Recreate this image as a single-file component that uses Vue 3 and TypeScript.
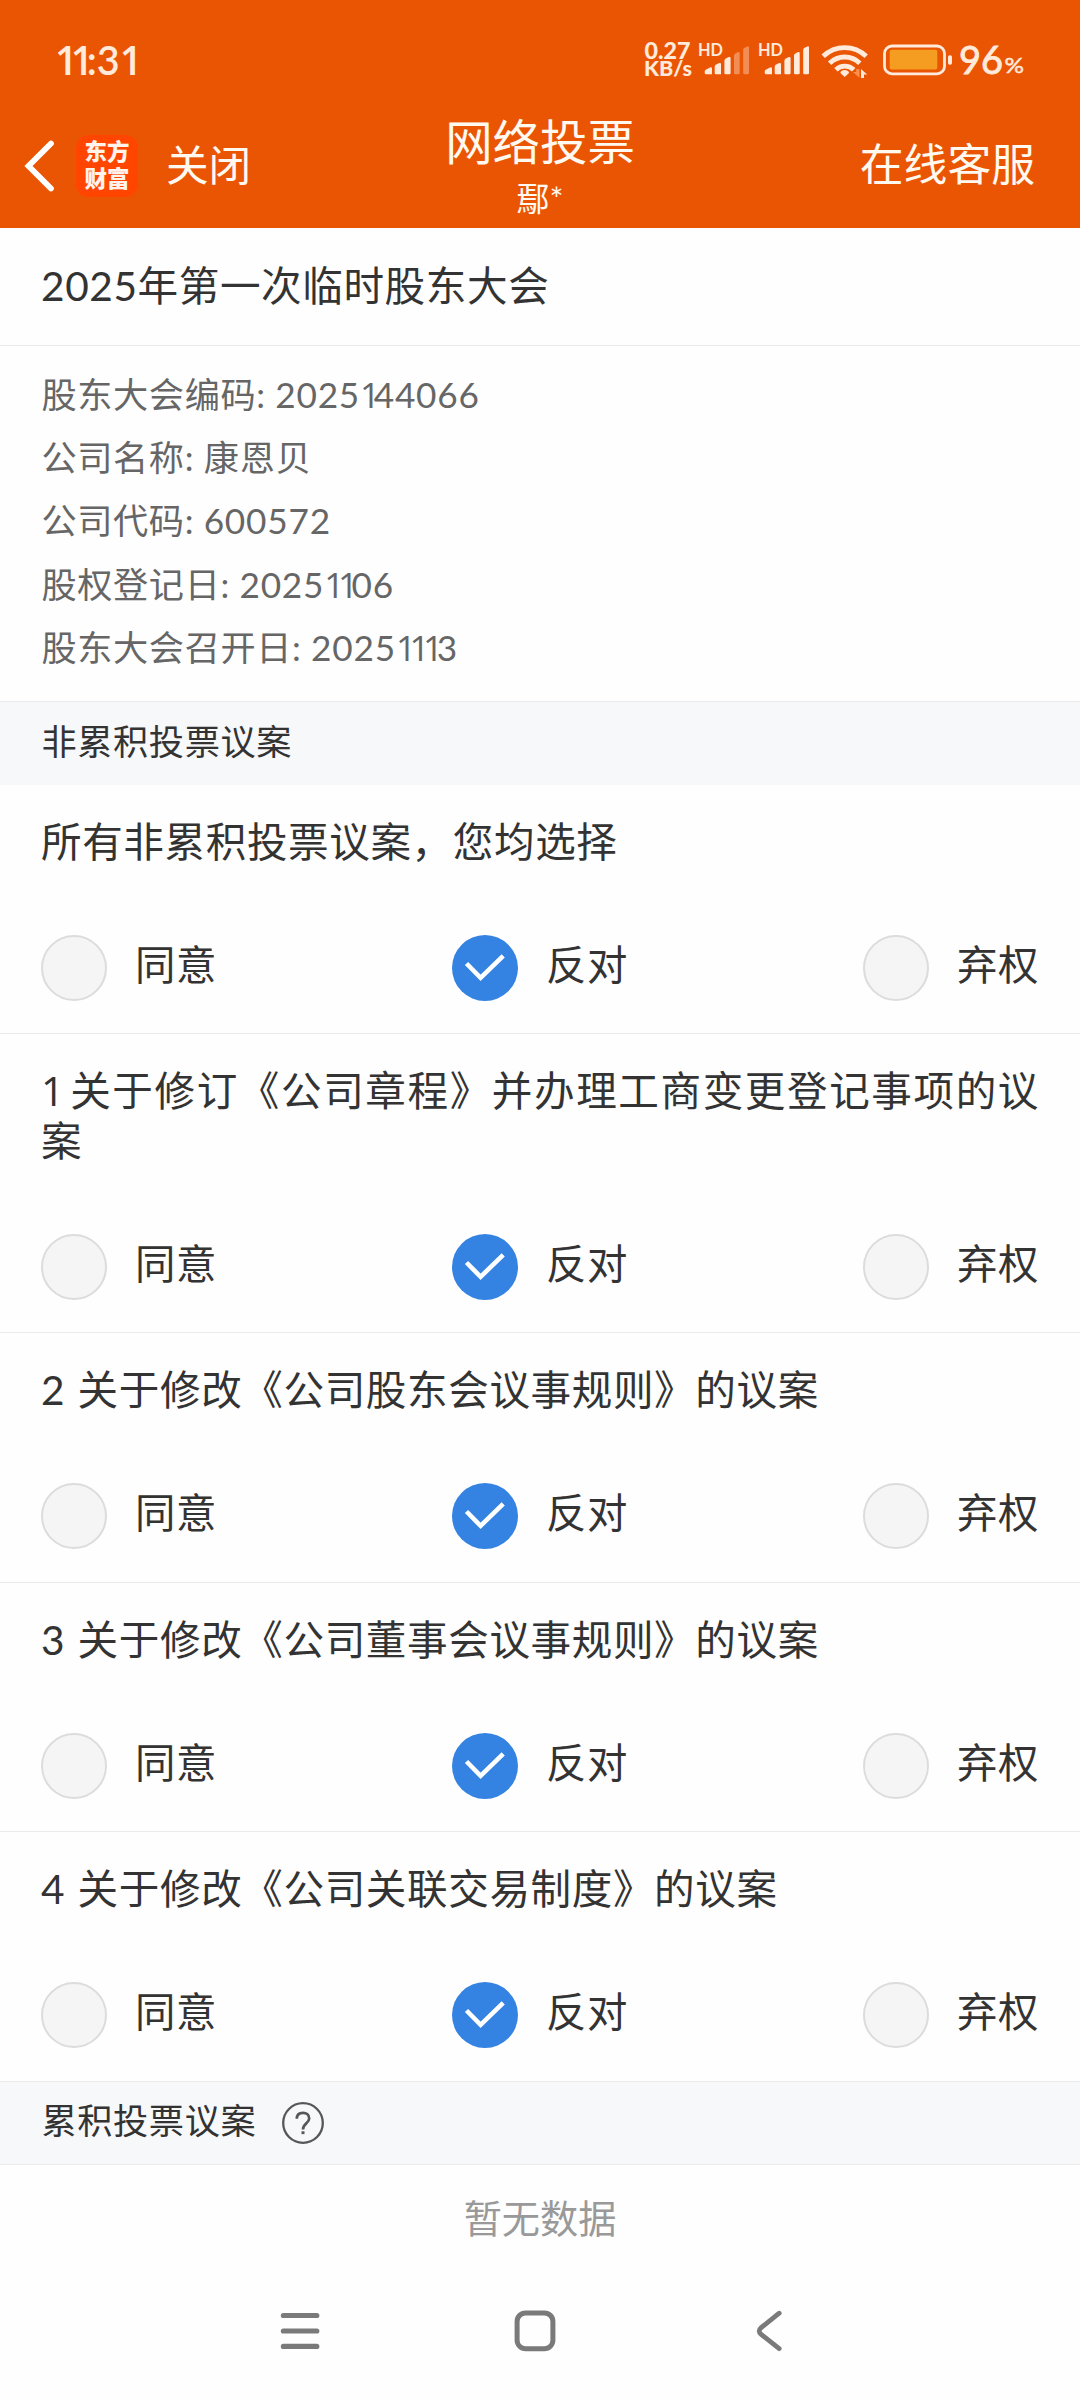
<script setup lang="ts">
import { ref } from 'vue'

type Choice = 'agree' | 'against' | 'abstain'

interface Proposal {
  title: string
  choice: Choice
}

const details = [
  { label: '股东大会编码', value: '2025144066' },
  { label: '公司名称', value: '康恩贝' },
  { label: '公司代码', value: '600572' },
  { label: '股权登记日', value: '20251106' },
  { label: '股东大会召开日', value: '20251113' },
]

const options: { key: Choice; text: string }[] = [
  { key: 'agree', text: '同意' },
  { key: 'against', text: '反对' },
  { key: 'abstain', text: '弃权' },
]

const proposals = ref<Proposal[]>([
  { title: '所有非累积投票议案，您均选择', choice: 'against' },
  { title: '1 关于修订《公司章程》并办理工商变更登记事项的议案', choice: 'against' },
  { title: '2 关于修改《公司股东会议事规则》的议案', choice: 'against' },
  { title: '3 关于修改《公司董事会议事规则》的议案', choice: 'against' },
  { title: '4 关于修改《公司关联交易制度》的议案', choice: 'against' },
])

// The digit 1 is set proportionally, narrower than the other figures.
function runs(text: string): string[] {
  return text.split(/(1+)/).filter((part) => part !== '')
}

function isOne(run: string): boolean {
  return run.startsWith('1')
}

function choose(index: number, key: Choice) {
  if (index === 0) proposals.value.forEach((p) => (p.choice = key))
  else proposals.value[index].choice = key
}
</script>

<template>
  <div class="screen">
    <header class="top">
      <div class="status">
        <span class="time"><span v-for="(r, k) in runs('11:31')" :key="k" :class="{ one: isOne(r) }">{{ r }}</span></span>
        <svg class="indicators" width="390" height="60" viewBox="640 30 390 60">
          <g fill="#ffeadb" font-family="Lato, sans-serif">
            <text x="644.5" y="58.6" font-size="23" font-weight="900" textLength="46" lengthAdjust="spacingAndGlyphs">0.27</text>
            <text x="644" y="76.3" font-size="21.5" font-weight="900" textLength="48" lengthAdjust="spacingAndGlyphs">KB/s</text>
            <g v-for="(off, n) in [0, 60]" :key="n" :transform="`translate(${off} 0)`">
              <text x="698" y="55.8" font-size="16.5" font-weight="700" textLength="25" lengthAdjust="spacingAndGlyphs">HD</text>
              <path d="M704.7 71.5q0-1.5 1.5-2.1l3.8-2q2-.6 2 1.2v5.7h-5.8q-1.5 0-1.5-1.5z" />
              <path d="M714.7 67q0-1.8 1.5-2.6l3-1.3q1.8-.6 1.8 1.2v10h-5q-1.3 0-1.3-1.3z" />
              <path d="M724.4 61q0-1.8 1.4-2.4l3-1.5q1.8-.6 1.8 1.2v14.7q0 1.3-1.3 1.3h-3.6q-1.3 0-1.3-1.3z" />
              <path :opacity="n ? 1 : 0.38" d="M734 55.6q0-1.6 1.4-2.2l2.6-1.3q1.7-.6 1.7 1.2V73q0 1.3-1.3 1.3h-3.1q-1.3 0-1.3-1.3z" />
              <path :opacity="n ? 1 : 0.38" d="M743.2 50q0-1.6 1.4-2.2l2.7-1.4q1.7-.6 1.7 1.2V73q0 1.3-1.3 1.3h-3.2q-1.3 0-1.3-1.3z" />
            </g>
            <g stroke="#ffeadb" stroke-width="0.9">
              <text x="959" y="74.4" font-size="39" textLength="44" lengthAdjust="spacingAndGlyphs">96</text>
              <text x="1004.5" y="73" font-size="21.5" stroke-width="0.5" textLength="19.5" lengthAdjust="spacingAndGlyphs">%</text>
            </g>
          </g>
          <g fill="none" stroke="#ffeadb" stroke-width="4.8">
            <path d="M823.2 56.2a31 31 0 0 1 43 0" />
            <path d="M829.6 63.2a21.5 21.5 0 0 1 30.2 0" />
            <path d="M835.9 69.8a12.6 12.6 0 0 1 17.8 0" />
          </g>
          <path d="M844.7 77l-3.8-3.4q-1.3-1.6.5-2.7 3.3-1.8 6.6 0 1.8 1.1.5 2.7z" fill="#ffeadb" />
          <path d="M859.4 69.3v8.4l-6.4-5.6h3.2v-2.8z" fill="#ff9052" />
          <path d="M861 78v-9l6.2 5.4H864V78z" fill="#ffeadb" />
          <rect x="884.5" y="46" width="60" height="27.8" rx="7.5" fill="none" stroke="#ffeadb" stroke-width="2.8" />
          <rect x="889.7" y="49.8" width="47.6" height="19.6" rx="2" fill="#f59d20" />
          <rect x="948" y="55.2" width="4" height="9.6" rx="1.8" fill="#ffeadb" />
        </svg>
      </div>

      <nav class="bar">
        <div class="left">
          <svg class="back" width="34" height="56" viewBox="0 0 34 56">
            <path d="M29 5.5 6.5 28 29 50.5" fill="none" stroke="#fff" stroke-width="5.8" stroke-linecap="round" stroke-linejoin="miter" />
          </svg>
          <div class="logo"><span>东方</span><span>财富</span></div>
          <span class="close">关闭</span>
        </div>
        <div class="heading">
          <div class="name">网络投票</div>
          <div class="user">鄢*</div>
        </div>
        <span class="service">在线客服</span>
      </nav>
    </header>

    <main>
      <h1 class="meeting">2025年第一次临时股东大会</h1>

      <dl class="details">
        <div v-for="d in details" :key="d.label" class="detail">
          <dt>{{ d.label }}:&nbsp;</dt>
          <dd><span v-for="(r, k) in runs(d.value)" :key="k" :class="{ one: isOne(r) }">{{ r }}</span></dd>
        </div>
      </dl>

      <div class="section first">非累积投票议案</div>

      <section v-for="(p, i) in proposals" :key="i" class="proposal">
        <p class="title"><span v-for="(r, k) in runs(p.title)" :key="k" :class="{ one: isOne(r) }">{{ r }}</span></p>
        <div class="options">
          <div v-for="o in options" :key="o.key" class="option" @click="choose(i, o.key)">
            <span class="radio" :class="{ on: p.choice === o.key }">
              <svg v-if="p.choice === o.key" width="66" height="66" viewBox="0 0 66 66">
                <path d="M14.5 28.5 28.6 42.8 51.2 20.8" fill="none" stroke="#fff" stroke-width="4.6" />
              </svg>
            </span>
            <span class="text">{{ o.text }}</span>
          </div>
        </div>
      </section>

      <div class="section second">
        <span>累积投票议案</span>
        <svg class="help" width="42" height="42" viewBox="0 0 42 42" fill="none" stroke="#555759">
          <circle cx="21" cy="21" r="19.8" stroke-width="2.3" />
          <path d="M14.8 16.8c0-4 2.6-6 6.2-6s6.2 2.2 6.2 5.6c0 4.6-6.2 5.2-6.2 11" stroke-width="2.7" />
          <path d="M21 29.3v2.8" stroke-width="3" />
        </svg>
      </div>

      <div class="empty">暂无数据</div>
    </main>

    <footer class="keys">
      <svg width="40" height="44" viewBox="0 0 40 44" fill="none" stroke="#7a7a7a" stroke-width="5.2" stroke-linecap="round">
        <path d="M3.4 6.5h33.4M3.4 22h33.4M3.4 37.4h33.4" />
      </svg>
      <svg width="42" height="44" viewBox="0 0 42 44" fill="none" stroke="#7a7a7a" stroke-width="5">
        <rect x="3.1" y="3.9" width="35.8" height="35.8" rx="8.5" />
      </svg>
      <svg width="28" height="44" viewBox="0 0 28 44" fill="none" stroke="#7a7a7a" stroke-width="4.8" stroke-linecap="round">
        <path d="M24.2 4.2 6.2 18.6q-4 3.4 0 6.8L24.2 39.6" />
      </svg>
    </footer>
  </div>
</template>

<style>
body {
  margin: 0;
  background: #fefefe;
}
</style>

<style scoped>
.screen {
  display: flex;
  flex-direction: column;
  width: 1080px;
  height: 2400px;
  overflow: hidden;
  background: #fefefe;
  color: #333;
  font-family: Lato, "Noto Sans CJK SC", sans-serif;
  text-spacing-trim: space-all;
}
.one {
  font-family: "Open Sans", sans-serif;
  letter-spacing: -0.185em;
}
.top {
  height: 228px;
  background: #ea5504;
  color: #fff9f0;
}
.status {
  display: flex;
  justify-content: space-between;
  height: 105px;
  padding: 30px 50px 0 55px;
  box-sizing: border-box;
}
.time {
  height: 60px;
  line-height: 60px;
  font-size: 39.5px;
  font-weight: 600;
  color: #ffeadb;
}
.time .one {
  letter-spacing: -0.17em;
}
.bar {
  display: grid;
  grid-template-columns: 1fr auto 1fr;
  height: 123px;
  padding: 0 22px;
}
.left {
  display: flex;
  align-items: center;
  height: 122px;
}
.logo {
  display: flex;
  flex-direction: column;
  justify-content: center;
  align-items: center;
  width: 62px;
  height: 62px;
  margin-left: 20px;
  padding-bottom: 2px;
  box-sizing: border-box;
  border-radius: 13px;
  background: #ff4500;
  color: #fff3ec;
  font-size: 22.5px;
  font-weight: 900;
  line-height: 27px;
}
.close {
  margin: 0 0 2px 28px;
  font-size: 42.6px;
  line-height: 60px;
}
.heading {
  display: flex;
  flex-direction: column;
  align-items: center;
  padding-top: 7px;
}
.name {
  font-size: 47.4px;
  line-height: 60px;
}
.user {
  margin-top: 6px;
  font-size: 33px;
  line-height: 40px;
}
.service {
  justify-self: end;
  height: 60px;
  margin: 29px 23px 0 0;
  font-size: 43.8px;
  line-height: 60px;
}
.meeting {
  height: 117px;
  margin: 0;
  padding: 0 41px;
  border-bottom: 1px solid #ebebeb;
  font-size: 40.6px;
  font-weight: 400;
  letter-spacing: 0.6px;
  line-height: 116px;
}
.details {
  height: 355px;
  margin: 0;
  padding: 17px 42px 0 41.5px;
  box-sizing: border-box;
  color: #666;
}
.detail {
  display: flex;
  height: 63.2px;
  font-size: 35.2px;
  letter-spacing: 0.6px;
  line-height: 63.2px;
}
.detail dd {
  margin: 0;
  letter-spacing: 0.8px;
}
.section {
  display: flex;
  align-items: center;
  height: 84px;
  box-sizing: border-box;
  padding: 0 41.5px 6px;
  border-top: 1px solid #ebebeb;
  background: #f7f8fa;
  font-size: 35.2px;
  letter-spacing: 0.6px;
  line-height: 60px;
}
.section.second {
  height: 83px;
  border-top: 0;
  border-bottom: 1px solid #ebebeb;
}
.help {
  margin: 6px 0 0 26px;
}
.proposal {
  padding: 32px 41px;
  border-bottom: 1px solid #ebebeb;
}
.proposal:nth-of-type(3),
.proposal:nth-of-type(5) {
  padding-bottom: 33px;
}
.title {
  margin: 0 0 68px;
  font-size: 40.6px;
  letter-spacing: 0.6px;
  word-spacing: 1.5px;
  line-height: 50px;
  text-align: justify;
}
.options {
  display: flex;
  justify-content: space-between;
}
.option {
  display: flex;
  height: 66px;
}
.radio {
  width: 66px;
  height: 66px;
  box-sizing: border-box;
  border: 2px solid #dcdcdc;
  border-radius: 50%;
  background: #f5f5f5;
}
.radio.on {
  border: 0;
  background: #3482e1;
}
.radio svg {
  display: block;
}
.text {
  margin-left: 28px;
  font-size: 40.4px;
  letter-spacing: 0.6px;
  line-height: 60px;
}
.empty {
  height: 106px;
  color: #999;
  font-size: 38.2px;
  line-height: 106px;
  text-align: center;
}
.keys {
  display: flex;
  align-items: center;
  height: 44px;
  margin-top: 38px;
  padding-left: 280px;
}
.keys svg + svg {
  margin-left: 194px;
}
.keys svg:last-child {
  margin-left: 199px;
}
</style>
